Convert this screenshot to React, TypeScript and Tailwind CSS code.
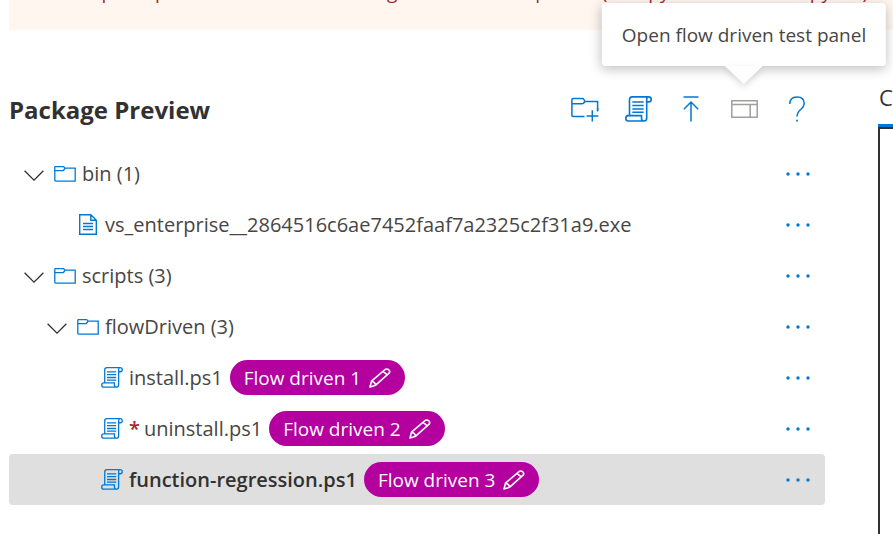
import React from "react";

const BLUE = "#0078d4";

function FolderIcon() {
  return (
    <svg width="22" height="16" viewBox="0 0 22 16" fill="none" stroke={BLUE} strokeWidth="1.3" className="shrink-0">
      <path d="M.8 14.3V1.3Q.8.7 1.5.7H9.3Q10 .7 10.3 1.3L11 2.2H21.2V15.1H1.5Q.8 15.1.8 14.3Z" />
      <path d="M.8 4.7H8.6Q9.3 4.7 9.8 4L11.2 2.2" />
    </svg>
  );
}

function FolderAddIcon() {
  return (
    <svg width="28" height="26" viewBox="0 0 28 26" fill="none" stroke={BLUE} strokeWidth="1.5">
      <path d="M13.5 20.6H1.9Q.9 20.6.9 19.6V3.8Q.9 2.6 2.1 2.6H11.4Q12.4 2.6 12.9 3.5L14 5.6H26.6V14.5" />
      <path d="M.9 7.8H11Q12 7.8 12.5 7.1L14 5.6M21.3 14.2V25.5M15.6 20H27.4M26.6 12V15.5" />
    </svg>
  );
}

function ScriptIcon({ large = false }: { large?: boolean }) {
  return (
    <svg width={large ? 27 : 22} height={large ? 26 : 21} viewBox="0 0 27 26" fill="none" stroke={BLUE} strokeWidth="1.6" className="shrink-0">
      <path d="M4.5 19.6V3.6Q4.5.9 7.2.9H23.3Q26.2.9 26.2 3.4Q26.2 5.9 23.7 5.9H21.7V22.3Q21.7 25 19 25H3.3Q.8 25 .8 22.2Q.8 19.6 3.3 19.6H16.5V22.3Q16.5 25 19 25" />
      <path d="M23.3.9Q21.7.9 21.7 3.4V6M7.3 6H18.7M7.3 9.5H18.7M7.3 13H18.7M7.3 16.3H18.7" />
    </svg>
  );
}

function DocumentIcon() {
  return (
    <svg width="18" height="21" viewBox="0 0 18 21" fill="none" stroke={BLUE} strokeWidth="1.4" className="shrink-0">
      <path d="M.7.7H11.8L17.3 6.2V20.3H.7ZM11.8.7V6.2H17.3M4 9.5H14M4 12.5H14M4 15.5H14" />
    </svg>
  );
}

function UploadIcon() {
  return (
    <svg width="16" height="26" viewBox="0 0 16 26" fill="none" stroke={BLUE} strokeWidth="1.5">
      <path d="M.5 1H15.5M8 25.5V6M.8 13.2L8 6L15.2 13.2" />
    </svg>
  );
}

function PanelIcon() {
  return (
    <svg width="27" height="18" viewBox="0 0 27 18" fill="none" stroke="#a19f9d" strokeWidth="1.5">
      <path d="M.8.8H26.2V17.2H.8ZM.8 4.4H26.2M19.2 4.4V17.2" />
    </svg>
  );
}

function HelpIcon() {
  return (
    <svg width="16" height="26" viewBox="0 0 16 26" fill="none" stroke={BLUE} strokeWidth="1.5">
      <path d="M.8 8Q.8.9 8 .9Q15.2.9 15.2 7.5Q15.2 10.5 12 13.2Q8 16.5 8 20.5" />
      <path d="M8 23.7V25.5" strokeWidth="1.8" />
    </svg>
  );
}

function ChevronIcon() {
  return (
    <svg width="20" height="11" viewBox="0 0 20 11" fill="none" stroke="#323130" strokeWidth="1.3">
      <path d="M.6.7L10 10.1L19.4.7" />
    </svg>
  );
}

function PencilIcon() {
  return (
    <svg width="22" height="20" viewBox="0 0 22 20" fill="none" stroke="#ffffff" strokeWidth="1.6" strokeLinejoin="round">
      <path d="M1 19L2.5 13.2L15.7 1.8Q17.4.3 19.4 1.5Q21.6 3.3 20.1 5.2L6.7 17.2ZM2.5 13.2Q5.8 13.6 6.7 17.2M14 3.4L18.3 6.9" />
    </svg>
  );
}

function MoreIcon() {
  return (
    <svg width="24" height="4" viewBox="0 0 24 4" fill={BLUE}>
      <circle cx="2" cy="2" r="1.7" />
      <circle cx="12" cy="2" r="1.7" />
      <circle cx="22" cy="2" r="1.7" />
    </svg>
  );
}

type Item = {
  name: string;
  indent: string;
  kind: "folder" | "document" | "script";
  flow?: string;
  required?: boolean;
  selected?: boolean;
};

const items: Item[] = [
  { name: "bin (1)", indent: "pl-[15px]", kind: "folder" },
  { name: "vs_enterprise__2864516c6ae7452faaf7a2325c2f31a9.exe", indent: "pl-[70px]", kind: "document" },
  { name: "scripts (3)", indent: "pl-[15px]", kind: "folder" },
  { name: "flowDriven (3)", indent: "pl-[38px]", kind: "folder" },
  { name: "install.ps1", indent: "pl-[92px]", kind: "script", flow: "Flow driven 1" },
  { name: "uninstall.ps1", indent: "pl-[92px]", kind: "script", flow: "Flow driven 2", required: true },
  { name: "function-regression.ps1", indent: "pl-[92px]", kind: "script", flow: "Flow driven 3", selected: true },
];

function TreeRow({ item }: { item: Item }) {
  return (
    <li className={`flex h-[51px] items-center rounded pr-[15px] ${item.indent} ${item.selected ? "bg-[#dfdfdf]" : ""}`}>
      {item.kind === "folder" && (
        <button aria-label={`Collapse ${item.name}`} className="mr-[10px] pt-1">
          <ChevronIcon />
        </button>
      )}
      {item.kind === "folder" && <FolderIcon />}
      {item.kind === "document" && <DocumentIcon />}
      {item.kind === "script" && <ScriptIcon />}
      <span className={`ml-[6px] pt-px text-xl leading-[26px] whitespace-nowrap ${item.selected ? "font-semibold" : "text-[#484644]"} ${item.kind === "document" ? "pl-[2px]" : ""}`}>
        {item.required && <span className="mr-1 font-semibold text-[#a4262c]">*</span>}
        {item.name}
      </span>
      {item.flow && (
        <button className="ml-[7px] flex h-[35px] shrink-0 items-center gap-2 rounded-full bg-[#b4009e] px-[14px] font-medium text-white">
          {item.flow}
          <PencilIcon />
        </button>
      )}
      <button aria-label={`More actions for ${item.name}`} className="ml-auto shrink-0 py-2">
        <MoreIcon />
      </button>
    </li>
  );
}

const toolButton = "flex w-7 justify-center";

export default function App() {
  return (
    <div className="flex h-screen flex-col overflow-hidden bg-white font-['Open_Sans','Noto_Sans',sans-serif] text-[19px] leading-[26px] text-[#323130]">
      <div role="alert" className="ml-[9px] h-[30px] shrink-0 overflow-hidden bg-[#fff6f0] pl-6 whitespace-nowrap text-[#a4262c]">
        <p className="-mt-[21px]">
          The script is open in a folder with the flag set in its test input file (numpy and the new copy file)
        </p>
      </div>
      <div className="flex flex-1">
        <main className="ml-[9px] min-w-0 flex-1">
          <header className="mt-[57px] flex h-11 items-center justify-between pr-[14px]">
            <h1 className="pt-[2px] text-2xl leading-[30px] font-bold">Package Preview</h1>
            <div className="flex items-center gap-[25px]">
              <button aria-label="Add folder" className={toolButton}><FolderAddIcon /></button>
              <button aria-label="Add script" className={toolButton}><ScriptIcon large /></button>
              <button aria-label="Upload" className={toolButton}><UploadIcon /></button>
              <div className="relative flex">
                <button aria-label="Open flow driven test panel" disabled className={toolButton}><PanelIcon /></button>
                <div role="tooltip" className="absolute bottom-[52px] left-1/2 flex h-[63px] -translate-x-1/2 items-center rounded-sm bg-white px-5 whitespace-nowrap text-[#484644] shadow-[0_3px_12px_rgba(0,0,0,0.25)]">
                  Open flow driven test panel
                  <svg width="38" height="18" viewBox="0 0 38 18" fill="#ffffff" className="absolute top-full left-1/2 -translate-x-1/2 drop-shadow-[0_3px_3px_rgba(0,0,0,0.15)]">
                    <path d="M0 0H38L19 18Z" />
                  </svg>
                </div>
              </div>
              <button aria-label="Help" className={toolButton}><HelpIcon /></button>
            </div>
          </header>
          <ul className="mt-[17px]">
            {items.map((item) => <TreeRow key={item.name} item={item} />)}
          </ul>
        </main>
        <aside className="mt-[54px] ml-[53px] flex w-[15px] shrink-0 flex-col overflow-hidden">
          <h2 className="h-10 pl-px text-[22px] leading-[26px]">C</h2>
          <div className="h-[3px] bg-[#0078d4]" />
          <div className="flex-1 border-t-2 border-l-2 border-[#323130]" />
        </aside>
      </div>
    </div>
  );
}
